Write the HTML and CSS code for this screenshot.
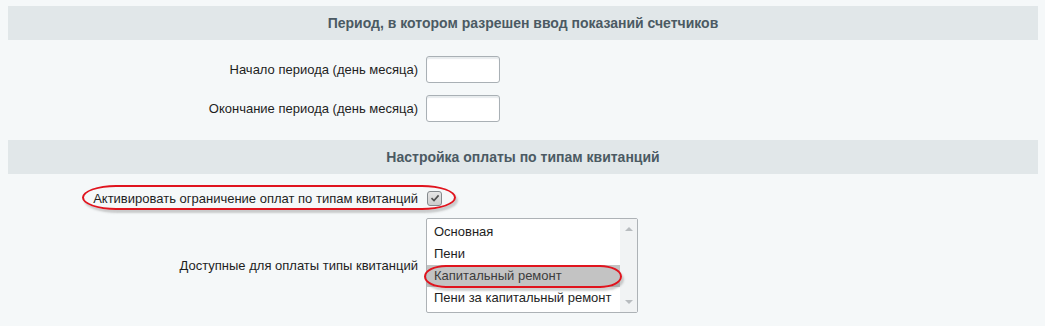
FILE: index.html
```html
<!DOCTYPE html>
<html lang="ru">
<head>
<meta charset="utf-8">
<title>Настройки</title>
<link rel="stylesheet" href="styles.css">
</head>
<body>
<div class="page">
  <div class="section-head">Период, в котором разрешен ввод показаний счетчиков</div>
  <div class="section-body first">
    <div class="row">
      <label class="lbl">Начало периода (день месяца)</label>
      <div class="ctl"><input class="txt" type="text"></div>
    </div>
    <div class="row">
      <label class="lbl">Окончание периода (день месяца)</label>
      <div class="ctl"><input class="txt" type="text"></div>
    </div>
  </div>
  <div class="section-head">Настройка оплаты по типам квитанций</div>
  <div class="section-body second">
    <div class="row check-row">
      <label class="lbl">Активировать ограничение оплат по типам квитанций</label>
      <div class="ctl"><span class="chk"><svg width="12" height="12" viewBox="0 0 12 12"><path d="M2.5 6.2 L5 8.6 L9.6 3.4" fill="none" stroke="#505050" stroke-width="1.6"/></svg></span></div>
      <span class="mark mark-check"></span>
    </div>
    <div class="row list-row">
      <label class="lbl">Доступные для оплаты типы квитанций</label>
      <div class="ctl">
        <div class="listbox">
          <div class="opts">
            <div class="opt">Основная</div>
            <div class="opt">Пени</div>
            <div class="opt sel">Капитальный ремонт</div>
            <div class="opt">Пени за капитальный ремонт</div>
          </div>
          <div class="sbar">
            <span class="arr up"></span>
            <span class="arr down"></span>
          </div>
          <span class="mark mark-opt"></span>
        </div>
      </div>
    </div>
  </div>
</div>
</body>
</html>
```

FILE: styles.css
```css
html, body {
  background: #f5f8f9;
}
body {
  margin: 6px 7px 0 8px;
  font-family: "Liberation Sans", Arial, sans-serif;
  font-size: 13px;
  color: #1e1e1e;
}
.section-head {
  height: 34px;
  line-height: 34px;
  background: #e1e7e9;
  text-align: center;
  font-weight: bold;
  color: #4b5a63;
  font-size: 14px;
}
.section-body.first {
  padding: 16px 0 18px;
  display: flex;
  flex-direction: column;
  gap: 12px;
}
.section-body.second {
  padding: 14px 0 0;
  display: flex;
  flex-direction: column;
  gap: 10px;
}
.row {
  display: grid;
  grid-template-columns: 410px auto;
  column-gap: 8px;
  align-items: center;
  position: relative;
}
.lbl {
  text-align: right;
  white-space: nowrap;
}
.ctl {
  display: flex;
  align-items: center;
}
.txt {
  box-sizing: border-box;
  width: 74px;
  height: 27px;
  margin: 0;
  border: 1px solid #a9b0b5;
  border-radius: 3px;
  background: #fff;
  box-shadow: inset 0 2px 1px #e8ecee;
}
.check-row {
  height: 20px;
}
.chk {
  box-sizing: border-box;
  flex: none;
  width: 15px;
  height: 15px;
  margin-left: 1px;
  border: 1px solid #858a8e;
  border-radius: 3px;
  background: linear-gradient(#e6e6e6, #cdcdcd);
  display: flex;
  align-items: center;
  justify-content: center;
}
.chk svg {
  display: block;
}
.listbox {
  position: relative;
  box-sizing: border-box;
  width: 212px;
  height: 95px;
  border: 1px solid #adb2b6;
  border-radius: 2px;
  background: #fff;
  display: flex;
}
.opts {
  flex: 1;
  padding-top: 2px;
}
.opt {
  height: 22px;
  line-height: 22px;
  padding-left: 7px;
  white-space: nowrap;
  color: #1e1e1e;
}
.opt.sel {
  background: #c3c3c3;
  color: #3c3c3c;
}
.sbar {
  width: 17px;
  background: #f1f3f4;
  position: relative;
}
.arr {
  position: absolute;
  left: 5px;
  width: 0;
  height: 0;
  border-left: 4px solid transparent;
  border-right: 4px solid transparent;
}
.arr.up {
  top: 8px;
  border-bottom: 4px solid #b8bcbf;
}
.arr.down {
  bottom: 8px;
  border-top: 4px solid #b8bcbf;
}
.mark {
  position: absolute;
  box-sizing: border-box;
  border: 2px solid #e0141e;
  box-shadow: 2px 3px 2px rgba(120, 120, 120, 0.35);
  pointer-events: none;
}
.mark-check {
  left: 74px;
  top: -3px;
  width: 374px;
  height: 25px;
  border-radius: 34px / 12.5px;
}
.mark-opt {
  left: -3px;
  top: 46px;
  width: 198px;
  height: 23px;
  border-radius: 22px / 11.5px;
}
```
